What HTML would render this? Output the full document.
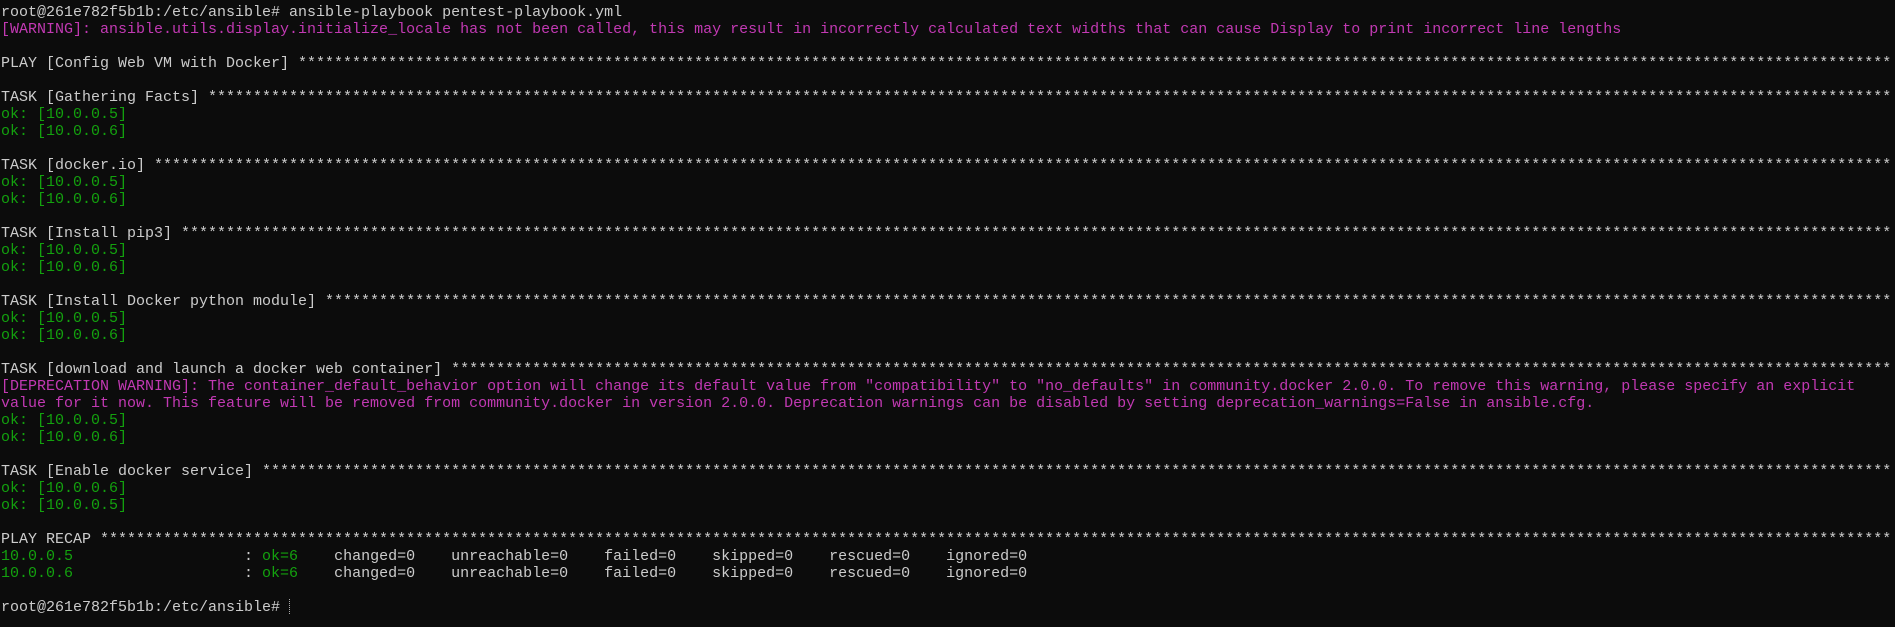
<!DOCTYPE html>
<html><head><meta charset="utf-8"><style>
html,body{margin:0;padding:0;background:#0c0c0c;width:1895px;height:627px;overflow:hidden}
#t{position:absolute;left:1px;top:4px;width:1892px;overflow:hidden;font-family:"Liberation Mono","DejaVu Sans Mono",monospace;font-size:15px;line-height:17px;color:#cccccc;white-space:pre}
.g{color:#13a10e}.m{color:#c239b3}
.cur{display:inline-block;width:1px;height:15px;border-left:1px dotted #aaa;vertical-align:-3px}
</style></head><body><div id="t"></div>
<script>
var S='*'.repeat(260);
var L=[
'root@261e782f5b1b:/etc/ansible# ansible-playbook pentest-playbook.yml',
'<span class="m">[WARNING]: ansible.utils.display.initialize_locale has not been called, this may result in incorrectly calculated text widths that can cause Display to print incorrect line lengths</span>',
'',
'PLAY [Config Web VM with Docker] '+S,
'',
'TASK [Gathering Facts] '+S,
'<span class="g">ok: [10.0.0.5]</span>',
'<span class="g">ok: [10.0.0.6]</span>',
'',
'TASK [docker.io] '+S,
'<span class="g">ok: [10.0.0.5]</span>',
'<span class="g">ok: [10.0.0.6]</span>',
'',
'TASK [Install pip3] '+S,
'<span class="g">ok: [10.0.0.5]</span>',
'<span class="g">ok: [10.0.0.6]</span>',
'',
'TASK [Install Docker python module] '+S,
'<span class="g">ok: [10.0.0.5]</span>',
'<span class="g">ok: [10.0.0.6]</span>',
'',
'TASK [download and launch a docker web container] '+S,
'<span class="m">[DEPRECATION WARNING]: The container_default_behavior option will change its default value from "compatibility" to "no_defaults" in community.docker 2.0.0. To remove this warning, please specify an explicit</span>',
'<span class="m">value for it now. This feature will be removed from community.docker in version 2.0.0. Deprecation warnings can be disabled by setting deprecation_warnings=False in ansible.cfg.</span>',
'<span class="g">ok: [10.0.0.5]</span>',
'<span class="g">ok: [10.0.0.6]</span>',
'',
'TASK [Enable docker service] '+S,
'<span class="g">ok: [10.0.0.6]</span>',
'<span class="g">ok: [10.0.0.5]</span>',
'',
'PLAY RECAP '+S,
'<span class="g">10.0.0.5</span>                   : <span class="g">ok=6</span>    changed=0    unreachable=0    failed=0    skipped=0    rescued=0    ignored=0',
'<span class="g">10.0.0.6</span>                   : <span class="g">ok=6</span>    changed=0    unreachable=0    failed=0    skipped=0    rescued=0    ignored=0',
'',
'root@261e782f5b1b:/etc/ansible# <span class="cur"></span>'
];
document.getElementById('t').innerHTML=L.map(function(x){return '<div>'+(x||' ')+'</div>'}).join('');
</script>
</body></html>
